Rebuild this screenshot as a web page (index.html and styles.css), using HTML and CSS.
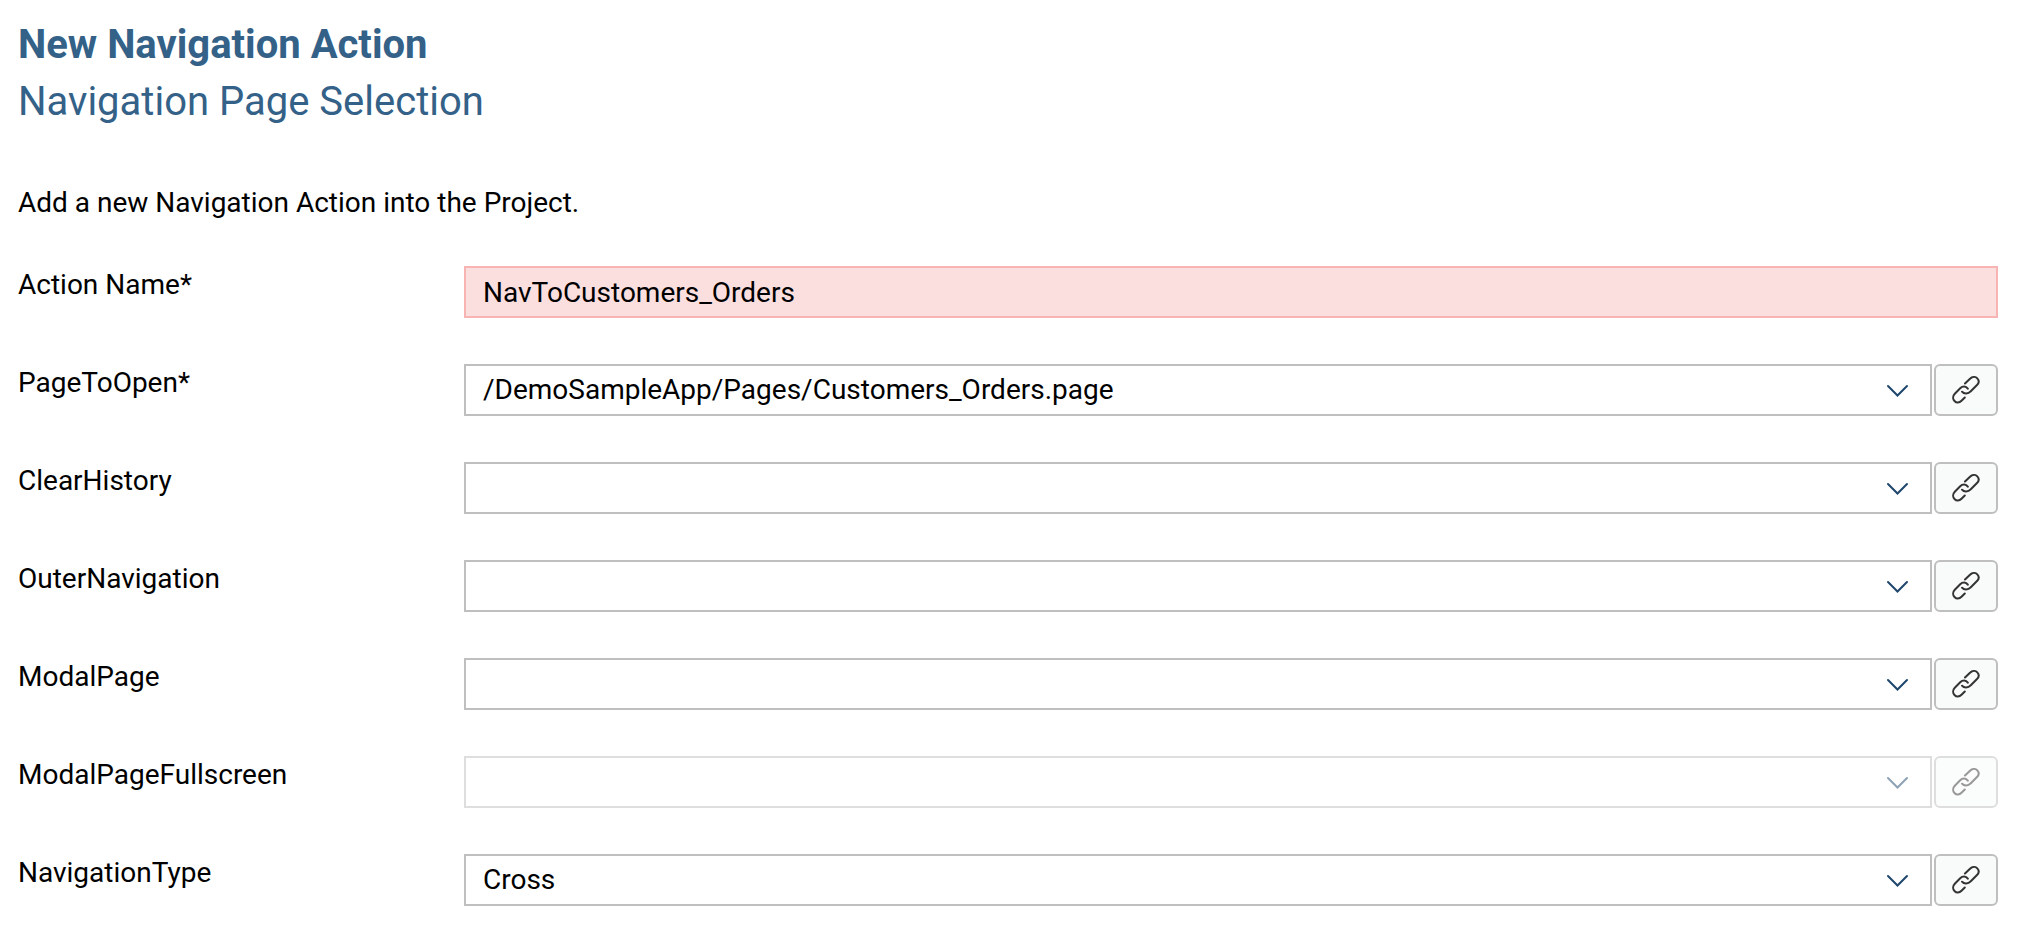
FILE: index.html
```html
<!DOCTYPE html>
<html lang="en">
<head>
<meta charset="utf-8">
<title>New Navigation Action</title>
<link rel="stylesheet" href="styles.css">
</head>
<body>
<svg class="symbols" aria-hidden="true">
  <symbol id="chevron" viewBox="0 0 24 16"><path d="M3 4 12.5 13.5 22 4"/></symbol>
  <symbol id="link" viewBox="0 0 28 28"><path d="M13 7.5 18 2.700C20.500.400 23.500.500 25.300 2.400C27.200 4.400 27 7 25 9L18.800 15.300C16 18.200 12 18.200 10 15.700M15.800 12.600C14 10 10.500 10 8.200 12.300L2.800 17.800C.700 20 .600 23 2.500 25C4.500 27.200 7.300 27 9.500 24.800L12.800 21.500"/></symbol>
</svg>
<main class="wizard">
  <header class="heading">
    <h1 class="title">New Navigation Action</h1>
    <h2 class="subtitle">Navigation Page Selection</h2>
  </header>
  <p class="description">Add a new Navigation Action into the Project.</p>
  <form class="form">
    <div class="row">
      <label class="label" for="action-name">Action Name*</label>
      <input class="field invalid" id="action-name" type="text" value="NavToCustomers_Orders">
    </div>
    <div class="row">
      <label class="label" for="page-to-open">PageToOpen*</label>
      <div class="control">
        <div class="combo"><select class="field" id="page-to-open"><option>/DemoSampleApp/Pages/Customers_Orders.page</option></select><svg class="chevron"><use href="#chevron"/></svg></div>
        <button class="bind" type="button" aria-label="Bind PageToOpen"><svg class="link"><use href="#link"/></svg></button>
      </div>
    </div>
    <div class="row">
      <label class="label" for="clear-history">ClearHistory</label>
      <div class="control">
        <div class="combo"><select class="field" id="clear-history"><option></option></select><svg class="chevron"><use href="#chevron"/></svg></div>
        <button class="bind" type="button" aria-label="Bind ClearHistory"><svg class="link"><use href="#link"/></svg></button>
      </div>
    </div>
    <div class="row">
      <label class="label" for="outer-navigation">OuterNavigation</label>
      <div class="control">
        <div class="combo"><select class="field" id="outer-navigation"><option></option></select><svg class="chevron"><use href="#chevron"/></svg></div>
        <button class="bind" type="button" aria-label="Bind OuterNavigation"><svg class="link"><use href="#link"/></svg></button>
      </div>
    </div>
    <div class="row">
      <label class="label" for="modal-page">ModalPage</label>
      <div class="control">
        <div class="combo"><select class="field" id="modal-page"><option></option></select><svg class="chevron"><use href="#chevron"/></svg></div>
        <button class="bind" type="button" aria-label="Bind ModalPage"><svg class="link"><use href="#link"/></svg></button>
      </div>
    </div>
    <div class="row">
      <label class="label" for="modal-fullscreen">ModalPageFullscreen</label>
      <div class="control disabled">
        <div class="combo"><select class="field" id="modal-fullscreen" disabled><option></option></select><svg class="chevron"><use href="#chevron"/></svg></div>
        <button class="bind" type="button" aria-label="Bind ModalPageFullscreen" disabled><svg class="link"><use href="#link"/></svg></button>
      </div>
    </div>
    <div class="row">
      <label class="label" for="navigation-type">NavigationType</label>
      <div class="control">
        <div class="combo"><select class="field" id="navigation-type"><option>Cross</option></select><svg class="chevron"><use href="#chevron"/></svg></div>
        <button class="bind" type="button" aria-label="Bind NavigationType"><svg class="link"><use href="#link"/></svg></button>
      </div>
    </div>
  </form>
</main>
</body>
</html>
```
FILE: styles.css
```css
* { box-sizing: border-box; }

body {
  margin: 0;
  background: #fff;
  color: #000;
  font-family: Roboto, "Noto Sans", sans-serif;
  font-size: 28px;
  line-height: 38px;
}

.symbols { display: none; }

.wizard { padding: 20px 22px 20px 18px; }

.title,
.subtitle,
.description { margin: 0; }

.title,
.subtitle {
  color: #346187;
  font-size: 40px;
}

.title {
  font-weight: 700;
  line-height: 50px;
}

.subtitle {
  font-weight: 400;
  line-height: 64px;
}

.description { margin-top: 50px; }

.form {
  display: grid;
  gap: 46px;
  margin-top: 44px;
}

.row {
  display: grid;
  grid-template-columns: 446px minmax(0, 1fr);
  align-items: start;
}

.control {
  display: flex;
  gap: 2px;
}

.combo {
  display: grid;
  flex: 1;
  align-items: center;
}

.combo > * { grid-area: 1 / 1; }

.field {
  appearance: none;
  width: 100%;
  height: 52px;
  margin: 0;
  padding: 0 17px;
  border: 2px solid #bfbfbf;
  border-radius: 0;
  background: #fff;
  color: #000;
  font: inherit;
}

.invalid {
  border-color: #f8b3b3;
  background: #fbdede;
}

.chevron {
  justify-self: end;
  width: 24px;
  height: 16px;
  margin-right: 23px;
  fill: none;
  stroke: #1f476d;
  stroke-width: 2;
  stroke-linecap: round;
  pointer-events: none;
}

.bind {
  display: grid;
  place-items: center;
  width: 64px;
  height: 52px;
  padding: 0;
  border: 2px solid #bfbfbf;
  border-radius: 6px;
  background: #f9fafa;
}

.link {
  width: 28px;
  height: 28px;
  fill: none;
  stroke: #333;
  stroke-width: 2;
  stroke-linecap: round;
}

.disabled { opacity: 0.5; }
.disabled .field { opacity: 1; }
```
